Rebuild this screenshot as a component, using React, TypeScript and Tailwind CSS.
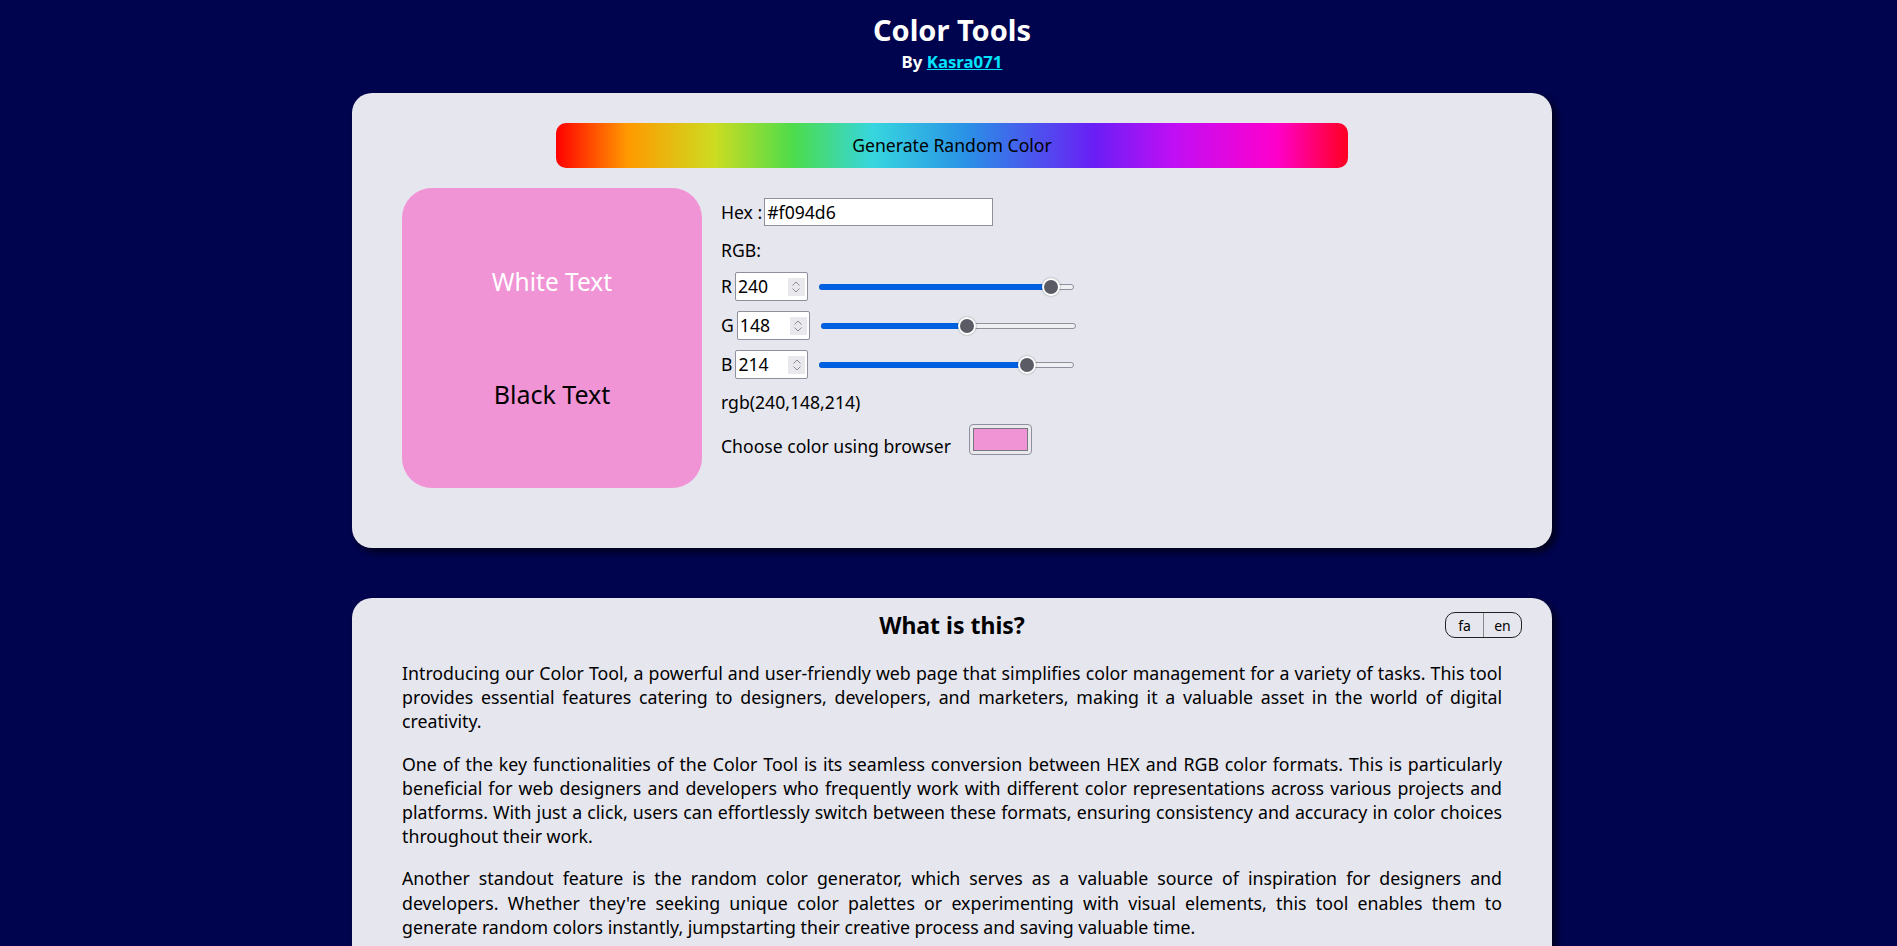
const channels = [
  { label: "R", value: 240 },
  { label: "G", value: 148 },
  { label: "B", value: 214 },
];

function Spinner() {
  return (
    <div className="flex h-[18px] w-[17px] flex-col items-center justify-center bg-[#e9e9ed]">
      <svg width="8" height="5" viewBox="0 0 8 5" fill="none" stroke="#8a8a95" strokeWidth="1">
        <path d="M0.5 4.5 L4 1 L7.5 4.5" />
      </svg>
      <svg width="8" height="5" viewBox="0 0 8 5" fill="none" stroke="#8a8a95" strokeWidth="1" className="mt-[2px]">
        <path d="M0.5 0.5 L4 4 L7.5 0.5" />
      </svg>
    </div>
  );
}

function Slider({ value }: { value: number }) {
  const frac = value / 255;
  return (
    <div className="relative ml-[11px] h-[20px] w-[255px]">
      <div className="absolute left-0 right-0 top-[7px] h-[6px] rounded-full border border-[#8f8f9d] bg-[#f0f0f4]" />
      <div
        className="absolute left-0 top-[7px] h-[6px] rounded-full bg-[#0060df]"
        style={{ width: 9 + frac * 237 }}
      />
      <div
        className="absolute top-[1px] h-[18px] w-[18px] rounded-full border-2 border-white bg-[#5b5b66] shadow-[0_0_2px_rgba(0,0,0,0.4)]"
        style={{ left: frac * 237 }}
      />
    </div>
  );
}

export default function App() {
  return (
    <div className="min-h-screen bg-[#00044f] pl-[7px] pb-[40px] font-['Noto_Sans',sans-serif] text-[17.6px] text-black">
      <header className="pt-[8px] pb-[21px] text-center text-white">
        <h1 className="text-[29px] font-bold leading-[44px]">Color Tools</h1>
        <p className="text-[16.8px] font-bold leading-[20px]">
          By{" "}
          <a href="#" className="text-[#00e5ff] underline">
            Kasra071
          </a>
        </p>
      </header>

      <section className="mx-auto h-[455px] w-[1200px] rounded-[20px] bg-[#e6e6ef] px-[50px] pt-[30px] shadow-[4px_4px_8px_rgba(0,0,0,0.7)]">
        <button className="mx-auto flex h-[45px] w-[792px] items-center justify-center rounded-[10px] bg-[linear-gradient(to_right,#ff0000_0%,#ff9900_9%,#cddc21_20%,#4cdc4c_30%,#36d6df_40%,#2a90e6_52%,#6a1ef5_68%,#c00ff5_78%,#ff00cc_91%,#ff0022_100%)] text-[17.6px] text-black">
          Generate Random Color
        </button>

        <div className="mt-[20px] flex">
          <div className="flex h-[300px] w-[300px] flex-col items-center rounded-[30px] bg-[#f094d6] pt-[78px] text-[24.5px] leading-[32px]">
            <span className="text-white">White Text</span>
            <span className="mt-[80px] text-[25px] text-black">Black Text</span>
          </div>

          <div className="ml-[19px] flex flex-col">
            <div className="mt-[10px] flex h-[28px] items-center gap-[2px]">
              <span>Hex :</span>
              <div className="flex h-[28px] w-[229px] items-center border border-[#8f8f9d] bg-white px-[2px]">
                #f094d6
              </div>
            </div>

            <div className="mt-[12px] h-[24px] leading-[24px]">RGB:</div>

            {channels.map((c) => (
              <div key={c.label} className="mt-[10px] flex h-[29px] items-center">
                <span className="mr-[3px]">{c.label}</span>
                <div className="flex h-[29px] w-[73px] items-center justify-between rounded-[2px] border border-[#8f8f9d] bg-white pl-[2px] pr-[2px]">
                  <span>{c.value}</span>
                  <Spinner />
                </div>
                <Slider value={c.value} />
              </div>
            ))}

            <div className="mt-[11px] h-[24px] leading-[24px]">rgb(240,148,214)</div>

            <div className="mt-[10px] flex h-[31px] items-start">
              <span className="pt-[10px] leading-[24px]">Choose color using browser</span>
              <div className="ml-[18px] h-[31px] w-[63px] rounded-[4px] border border-[#8f8f9d] bg-[#e9e9ed] p-[3px]">
                <div className="h-full w-full border border-[#77777f] bg-[#f094d6]" />
              </div>
            </div>
          </div>
        </div>
      </section>

      <section className="mx-auto mt-[50px] w-[1200px] rounded-[20px] bg-[#e6e6ef] px-[50px] pt-[11px] pb-[30px] shadow-[4px_4px_8px_rgba(0,0,0,0.7)]">
        <div className="-mx-[20px] grid grid-cols-[1fr_auto_1fr] items-center">
          <div />
          <h2 className="text-[23px] font-bold leading-[32px]">What is this?</h2>
          <div className="flex h-[26px] w-[77px] justify-self-end overflow-hidden rounded-[10px] border border-[#222] text-[14px]">
            <button className="flex-1 border-r border-[#888]">fa</button>
            <button className="flex-1">en</button>
          </div>
        </div>

        <div className="mt-[20px] text-justify text-[17.75px] leading-[24.2px]">
          <p>
            Introducing our Color Tool, a powerful and user-friendly web page that simplifies color
            management for a variety of tasks. This tool provides essential features catering to
            designers, developers, and marketers, making it a valuable asset in the world of digital
            creativity.
          </p>
          <p className="mt-[18px]">
            One of the key functionalities of the Color Tool is its seamless conversion between HEX
            and RGB color formats. This is particularly beneficial for web designers and developers
            who frequently work with different color representations across various projects and
            platforms. With just a click, users can effortlessly switch between these formats,
            ensuring consistency and accuracy in color choices throughout their work.
          </p>
          <p className="mt-[18px]">
            Another standout feature is the random color generator, which serves as a valuable source
            of inspiration for designers and developers. Whether they're seeking unique color palettes
            or experimenting with visual elements, this tool enables them to generate random colors
            instantly, jumpstarting their creative process and saving valuable time.
          </p>
        </div>
      </section>
    </div>
  );
}
